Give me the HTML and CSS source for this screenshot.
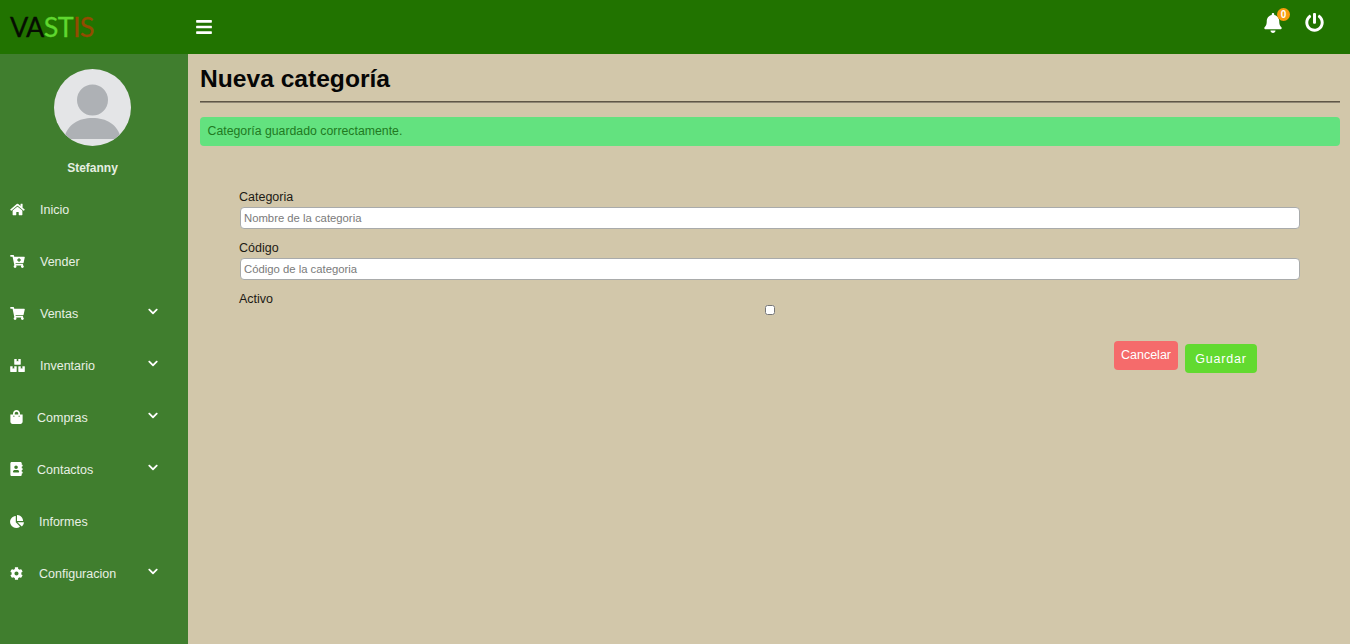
FILE: index.html
```html
<!DOCTYPE html>
<html lang="es">
<head>
<meta charset="utf-8">
<title>Nueva categoría</title>
<link rel="stylesheet" href="styles.css">
</head>
<body>
<header class="topbar">
  <div class="brand"><span class="b-black">VA</span><span class="b-green">ST</span><span class="b-brown">IS</span></div>
  <svg class="burger" viewBox="0 0 448 512"><path d="M16 132h416c8.837 0 16-7.163 16-16V76c0-8.837-7.163-16-16-16H16C7.163 60 0 67.163 0 76v40c0 8.837 7.163 16 16 16zm0 160h416c8.837 0 16-7.163 16-16v-40c0-8.837-7.163-16-16-16H16c-8.837 0-16 7.163-16 16v40c0 8.837 7.163 16 16 16zm0 160h416c8.837 0 16-7.163 16-16v-40c0-8.837-7.163-16-16-16H16c-8.837 0-16 7.163-16 16v40c0 8.837 7.163 16 16 16z"/></svg>
  <div class="top-actions">
    <div class="bell">
      <svg class="bell-icon" viewBox="0 0 448 512"><path d="M224 512c35.32 0 63.97-28.65 63.97-64H160.03c0 35.35 28.65 64 63.97 64zm215.39-149.71c-19.32-20.76-55.47-51.99-55.47-154.29 0-77.7-54.48-139.9-127.94-155.16V32c0-17.67-14.32-32-31.98-32s-31.98 14.33-31.98 32v20.84C118.56 68.1 64.08 130.3 64.08 208c0 102.3-36.15 133.53-55.47 154.29-6 6.45-8.66 14.16-8.61 21.71.11 16.4 12.98 32 32.1 32h383.8c19.12 0 32-15.6 32.1-32 .05-7.55-2.61-15.27-8.61-21.71z"/></svg>
      <span class="badge">0</span>
    </div>
    <svg class="power" viewBox="0 0 512 512"><path d="M400 54.1c63 45 104 118.6 104 201.9 0 136.8-110.8 247.7-247.5 248C120 504.3 8.2 393 8 256.4 7.9 173.1 48.9 99.3 111.8 54.2c11.7-8.3 28-4.8 35 7.7L162.6 90c5.9 10.5 3.1 23.8-6.6 31-41.5 30.8-68 79.6-68 134.9-.1 92.3 74.5 168.1 168 168.1 91.6 0 168.6-74.2 168-169.1-.3-51.8-24.7-101.8-68.1-134-9.7-7.2-12.4-20.5-6.5-30.9l15.8-28.1c7-12.4 23.2-16.1 34.8-7.8zM296 264V24c0-13.3-10.7-24-24-24h-32c-13.3 0-24 10.7-24 24v240c0 13.3 10.7 24 24 24h32c13.3 0 24-10.7 24-24z"/></svg>
  </div>
</header>
<div class="shell">
  <aside class="sidebar">
    <svg class="avatar" viewBox="0 0 77 77">
      <defs><clipPath id="av"><circle cx="38.5" cy="38.5" r="38.5"/></clipPath></defs>
      <g clip-path="url(#av)">
        <rect width="77" height="77" fill="#e4e5e7"/>
        <circle cx="38.5" cy="31" r="15.5" fill="#aeb1b5"/>
        <path d="M10 70c3-15 15-21 28.500-21S64 55 67 70z" fill="#aeb1b5"/>
      </g>
    </svg>
    <div class="username">Stefanny</div>
    <nav class="menu">
      <a class="item"><svg class="ico" viewBox="0 0 576 512"><path d="M280.37 148.26L96 300.11V464a16 16 0 0 0 16 16l112.06-.29a16 16 0 0 0 15.92-16V368a16 16 0 0 1 16-16h64a16 16 0 0 1 16 16v95.64a16 16 0 0 0 16 16.05L464 480a16 16 0 0 0 16-16V300L295.67 148.26a12.19 12.19 0 0 0-15.3 0zM571.6 251.47L488 182.56V44.05a12 12 0 0 0-12-12h-56a12 12 0 0 0-12 12v72.61L318.47 43a48 48 0 0 0-61 0L4.34 251.47a12 12 0 0 0-1.6 16.9l25.5 31A12 12 0 0 0 45.15 301l235.22-193.74a12.19 12.19 0 0 1 15.3 0L530.9 301a12 12 0 0 0 16.9-1.6l25.5-31a12 12 0 0 0-1.7-16.93z"/></svg><span class="label gap-wide">Inicio</span></a>
      <a class="item"><svg class="ico" viewBox="0 0 576 512"><path d="M528.12 301.319l47.273-208C578.806 78.301 567.391 64 551.99 64H159.208l-9.166-44.81C147.758 8.021 137.93 0 126.529 0H24C10.745 0 0 10.745 0 24v16c0 13.255 10.745 24 24 24h69.883l70.248 343.435C147.325 417.1 136 435.222 136 456c0 30.928 25.072 56 56 56s56-25.072 56-56c0-15.674-6.447-29.835-16.824-40h209.647C430.447 426.165 424 440.326 424 456c0 30.928 25.072 56 56 56s56-25.072 56-56c0-22.172-12.888-41.332-31.579-50.405l5.517-24.276c3.413-15.018-8.002-29.319-23.403-29.319H218.117l-6.545-32h293.145c11.206 0 20.92-7.754 23.403-18.681z"/><path class="cut" d="M320 130h56v42h42v56h-42v42h-56v-42h-42v-56h42z"/></svg><span class="label gap-wide">Vender</span></a>
      <a class="item"><svg class="ico" viewBox="0 0 576 512"><path d="M528.12 301.319l47.273-208C578.806 78.301 567.391 64 551.99 64H159.208l-9.166-44.81C147.758 8.021 137.93 0 126.529 0H24C10.745 0 0 10.745 0 24v16c0 13.255 10.745 24 24 24h69.883l70.248 343.435C147.325 417.1 136 435.222 136 456c0 30.928 25.072 56 56 56s56-25.072 56-56c0-15.674-6.447-29.835-16.824-40h209.647C430.447 426.165 424 440.326 424 456c0 30.928 25.072 56 56 56s56-25.072 56-56c0-22.172-12.888-41.332-31.579-50.405l5.517-24.276c3.413-15.018-8.002-29.319-23.403-29.319H218.117l-6.545-32h293.145c11.206 0 20.92-7.754 23.403-18.681z"/></svg><span class="label gap-wide">Ventas</span><svg class="chev" viewBox="0 0 448 512"><path d="M207.029 381.476L12.686 187.132c-9.373-9.373-9.373-24.569 0-33.941l22.667-22.667c9.357-9.357 24.522-9.375 33.901-.04L224 284.505l154.745-154.021c9.379-9.335 24.544-9.317 33.901.04l22.667 22.667c9.373 9.373 9.373 24.569 0 33.941L240.971 381.476c-9.373 9.372-24.569 9.372-33.942 0z"/></svg></a>
      <a class="item"><svg class="ico" viewBox="0 0 576 512"><path d="M560 288h-80v96l-32-21.300-32 21.300v-96h-80c-8.800 0-16 7.200-16 16v192c0 8.800 7.200 16 16 16h224c8.800 0 16-7.200 16-16V304c0-8.800-7.200-16-16-16zm-384-64h224c8.800 0 16-7.200 16-16V16c0-8.800-7.200-16-16-16h-80v96l-32-21.300L256 96V0h-80c-8.800 0-16 7.200-16 16v192c0 8.800 7.200 16 16 16zm64 64h-80v96l-32-21.300L96 384v-96H16c-8.800 0-16 7.200-16 16v192c0 8.800 7.200 16 16 16h224c8.800 0 16-7.200 16-16V304c0-8.800-7.200-16-16-16z"/></svg><span class="label gap-wide">Inventario</span><svg class="chev" viewBox="0 0 448 512"><path d="M207.029 381.476L12.686 187.132c-9.373-9.373-9.373-24.569 0-33.941l22.667-22.667c9.357-9.357 24.522-9.375 33.901-.04L224 284.505l154.745-154.021c9.379-9.335 24.544-9.317 33.901.04l22.667 22.667c9.373 9.373 9.373 24.569 0 33.941L240.971 381.476c-9.373 9.372-24.569 9.372-33.942 0z"/></svg></a>
      <a class="item"><svg class="ico ico-narrow" viewBox="0 0 448 512"><path d="M352 160v-32C352 57.420 294.579 0 224 0 153.420 0 96 57.420 96 128v32H0v272c0 44.183 35.817 80 80 80h288c44.183 0 80-35.817 80-80V160h-96zm-192-32c0-35.290 28.710-64 64-64s64 28.710 64 64v32H160v-32zm160 120c-13.255 0-24-10.745-24-24s10.745-24 24-24 24 10.745 24 24-10.745 24-24 24zm-192 0c-13.255 0-24-10.745-24-24s10.745-24 24-24 24 10.745 24 24-10.745 24-24 24z"/></svg><span class="label gap-mid">Compras</span><svg class="chev" viewBox="0 0 448 512"><path d="M207.029 381.476L12.686 187.132c-9.373-9.373-9.373-24.569 0-33.941l22.667-22.667c9.357-9.357 24.522-9.375 33.901-.04L224 284.505l154.745-154.021c9.379-9.335 24.544-9.317 33.901.04l22.667 22.667c9.373 9.373 9.373 24.569 0 33.941L240.971 381.476c-9.373 9.372-24.569 9.372-33.942 0z"/></svg></a>
      <a class="item"><svg class="ico ico-narrow" viewBox="0 0 448 512"><path d="M436 160c6.600 0 12-5.400 12-12v-40c0-6.600-5.400-12-12-12h-20V48c0-26.500-21.500-48-48-48H48C21.500 0 0 21.500 0 48v416c0 26.500 21.500 48 48 48h320c26.500 0 48-21.500 48-48v-48h20c6.600 0 12-5.400 12-12v-40c0-6.600-5.400-12-12-12h-20v-64h20c6.600 0 12-5.400 12-12v-40c0-6.600-5.400-12-12-12h-20v-64h20zm-228-32c35.300 0 64 28.700 64 64s-28.700 64-64 64-64-28.700-64-64 28.700-64 64-64zm112 236.800c0 10.600-10 19.200-22.400 19.200H118.400C106 384 96 375.400 96 364.800v-19.200c0-31.800 30.100-57.600 67.200-57.600h5c12.300 5.100 25.700 8 39.800 8s27.600-2.900 39.800-8h5c37.100 0 67.200 25.800 67.200 57.600v19.200z"/></svg><span class="label gap-mid">Contactos</span><svg class="chev" viewBox="0 0 448 512"><path d="M207.029 381.476L12.686 187.132c-9.373-9.373-9.373-24.569 0-33.941l22.667-22.667c9.357-9.357 24.522-9.375 33.901-.04L224 284.505l154.745-154.021c9.379-9.335 24.544-9.317 33.901.04l22.667 22.667c9.373 9.373 9.373 24.569 0 33.941L240.971 381.476c-9.373 9.372-24.569 9.372-33.942 0z"/></svg></a>
      <a class="item"><svg class="ico ico-pie" viewBox="0 0 544 512"><path d="M527.790 288H290.500l158.030 158.030c6.040 6.040 15.980 6.530 22.190.680 38.700-36.460 65.320-85.610 73.130-140.860 1.340-9.460-6.510-17.850-16.060-17.850zm-15.830-64.800C503.720 103.740 408.260 8.280 288.800.040 279.680-.590 272 7.100 272 16.240V240h223.770c9.140 0 16.820-7.680 16.190-16.800zM224 288V50.710c0-9.550-8.390-17.400-17.840-16.060C86.990 51.490-4.100 155.600.140 280.370 4.500 408.510 114.830 513.590 243.030 511.980c50.400-.630 96.970-16.870 135.260-44.030 7.900-5.600 8.420-17.230 1.570-24.080L224 288z"/></svg><span class="label gap-pie">Informes</span></a>
      <a class="item"><svg class="ico ico-cog" viewBox="0 0 512 512"><path d="M487.400 315.700l-42.600-24.600c4.300-23.200 4.300-47 0-70.200l42.600-24.600c4.900-2.800 7.100-8.600 5.500-14-11.100-35.600-30-67.800-54.700-94.600-3.800-4.100-10-5.100-14.800-2.300L380.800 110c-17.900-15.400-38.500-27.300-60.800-35.100V25.800c0-5.600-3.900-10.500-9.400-11.700-36.700-8.200-74.300-7.800-109.200 0-5.500 1.200-9.400 6.100-9.400 11.700V75c-22.200 7.900-42.800 19.800-60.800 35.100L88.700 85.500c-4.900-2.800-11-1.900-14.800 2.300-24.700 26.700-43.600 58.900-54.700 94.600-1.700 5.400.6 11.200 5.500 14L67.300 221c-4.300 23.200-4.300 47 0 70.200l-42.600 24.600c-4.900 2.800-7.100 8.600-5.500 14 11.100 35.600 30 67.800 54.700 94.600 3.800 4.100 10 5.100 14.800 2.300l42.600-24.600c17.900 15.400 38.500 27.300 60.800 35.100v49.200c0 5.600 3.900 10.500 9.400 11.700 36.700 8.200 74.300 7.800 109.200 0 5.500-1.200 9.400-6.100 9.400-11.700v-49.200c22.200-7.900 42.800-19.800 60.800-35.100l42.600 24.600c4.900 2.800 11 1.900 14.800-2.300 24.700-26.700 43.600-58.900 54.700-94.600 1.500-5.500-.7-11.300-5.600-14.100zM256 336c-44.100 0-80-35.900-80-80s35.900-80 80-80 80 35.900 80 80-35.900 80-80 80z"/></svg><span class="label gap-cog">Configuracion</span><svg class="chev" viewBox="0 0 448 512"><path d="M207.029 381.476L12.686 187.132c-9.373-9.373-9.373-24.569 0-33.941l22.667-22.667c9.357-9.357 24.522-9.375 33.901-.04L224 284.505l154.745-154.021c9.379-9.335 24.544-9.317 33.901.04l22.667 22.667c9.373 9.373 9.373 24.569 0 33.941L240.971 381.476c-9.373 9.372-24.569 9.372-33.942 0z"/></svg></a>
    </nav>
  </aside>
  <main class="content">
    <h1 class="title">Nueva categoría</h1>
    <div class="alert">Categoría guardado correctamente.</div>
    <form class="form">
      <label class="field-label">Categoria</label>
      <input class="input" type="text" placeholder="Nombre de la categoria">
      <label class="field-label">Código</label>
      <input class="input" type="text" placeholder="Código de la categoria">
      <label class="field-label">Activo</label>
      <div class="check-row"><input class="check" type="checkbox"></div>
      <div class="actions">
        <button class="btn btn-cancel" type="button">Cancelar</button>
        <button class="btn btn-save" type="button">Guardar</button>
      </div>
    </form>
  </main>
</div>
</body>
</html>
```
FILE: styles.css
```css
* { box-sizing: border-box; }
html, body { margin: 0; height: 100%; overflow: hidden; }
body { font-family: "Liberation Sans", Arial, sans-serif; background: #d2c7aa; color: #111; }

.topbar { height: 54px; background: #217300; display: flex; align-items: center; padding: 0 26px 0 10px; }
.brand { width: 186px; font-family: Lato, sans-serif; font-size: 27px; line-height: 54px; letter-spacing: -0.7px; -webkit-text-stroke: 0.3px; }
.b-black { color: #060d02; }
.b-green { color: #5fd72f; }
.b-brown { color: #934b00; }
.burger { width: 16px; height: 18px; fill: #fff; }
.top-actions { margin-left: auto; display: flex; align-items: center; gap: 23px; margin-bottom: 9px; }
.bell { position: relative; width: 18px; height: 20px; }
.bell-icon { width: 18px; height: 20px; fill: #fff; display: block; }
.badge { position: absolute; left: 13px; top: -5px; width: 13px; height: 13px; border-radius: 50%; background: #f89c0e; color: #fff; font-size: 10px; font-weight: 700; line-height: 13px; text-align: center; }
.power { width: 19px; height: 19px; fill: #fff; display: block; }

.shell { display: flex; height: 590px; }
.sidebar { width: 188px; background: #407e2e; display: flex; flex-direction: column; align-items: center; padding-top: 15px; }
.avatar { width: 77px; height: 77px; display: block; margin-left: -3px; flex: none; }
.username { margin-top: 14px; margin-left: -3px; font-size: 12px; font-weight: 700; line-height: 16px; color: #e6efe2; }
.menu { width: 100%; margin-top: 8px; }
.item { height: 52px; display: flex; align-items: center; padding: 0 29px 0 10px; color: #e8f0e4; font-size: 12.5px; }
.ico { width: 15px; height: 13px; fill: #fff; flex: none; margin-bottom: 2px; }
.cut { fill: #407e2e; }
.ico-narrow { width: 13px; height: 14px; }
.ico-pie { width: 14px; height: 13px; }
.ico-cog { width: 13px; height: 13px; }
.label { flex: 1; }
.gap-wide { margin-left: 15px; }
.gap-mid { margin-left: 14px; }
.gap-pie { margin-left: 15px; }
.gap-cog { margin-left: 16px; }
.chev { width: 10px; height: 11px; fill: #fff; flex: none; margin: 0 1px 6px 0; }

.content { flex: 1; padding: 12px 10px 0 12px; }
.title { margin: 0; height: 36px; font-size: 24.6px; font-weight: 700; line-height: 26px; color: #060606; border-bottom: 1px solid #5f5646; box-shadow: 0 1px 0 #8f8674; }
.alert { margin-top: 15px; height: 29px; background: #63e27f; border-radius: 4px; padding: 0 7.5px; font-size: 12.3px; line-height: 29px; color: #217a1f; }
.form { padding: 42px 40px 0; display: flex; flex-direction: column; }
.field-label { font-size: 12.5px; line-height: 18px; color: #1c1a14; margin-left: -1px; }
.input { width: 100%; height: 22px; margin: 1px 0 10px; padding: 0 3px; border: 1.5px solid #a9abab; border-radius: 4px; background: #fff; font-family: inherit; font-size: 11.3px; color: #333; outline: none; }
.input::placeholder { color: #7a7a7a; opacity: 1; }
.check-row { display: flex; justify-content: center; height: 13px; }
.check { margin: 0; width: 10px; height: 10px; margin-top: -3px; }
.actions { display: flex; justify-content: flex-end; align-items: flex-start; gap: 7px; margin-top: 20px; padding-right: 42px; }
.btn { border: 0; border-radius: 4px; color: #fff; font-family: inherit; padding: 0; }
.btn-cancel { width: 64px; height: 29px; background: #f56b6b; font-size: 12.5px; padding-bottom: 1px; }
.btn-save { width: 72px; height: 29px; margin-top: 3px; background: #62da30; font-size: 12.5px; letter-spacing: 0.8px; margin-right: 1px; }
```
